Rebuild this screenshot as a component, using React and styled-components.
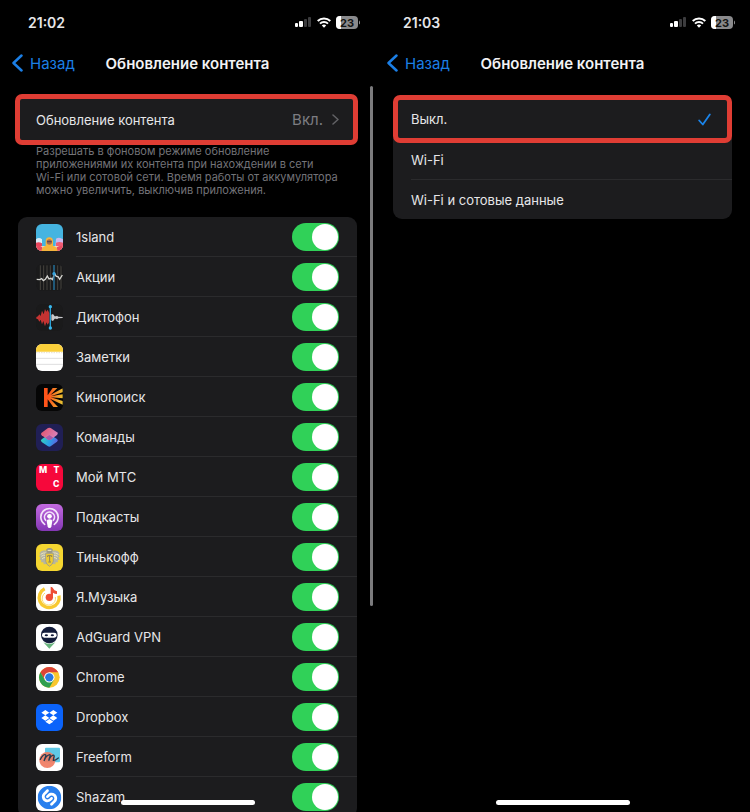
import React from 'react';
import styled, { createGlobalStyle, css } from 'styled-components';
import { SiShazam } from 'react-icons/si';

const GlobalStyle = createGlobalStyle`
    *{
        box-sizing: border-box;
    }
    body{
        margin: 0;
        background-color: #000;
        color: #e6e6e8;
        font-family: Inter, "Noto Sans", sans-serif;
        font-size: 13px;
    }
`;

const Screens = styled.div`
    display: grid;
    grid-template-columns: 1fr 1fr;
    height: 100vh;
`;

const Phone = styled.section`
    position: relative;
    display: flex;
    flex-direction: column;
    min-width: 0;
    min-height: 0;
`;

const StatusBar = styled.div`
    display: flex;
    justify-content: space-between;
    align-items: center;
    height: 44px;
    padding: 0 15px 0 28px;
    flex-shrink: 0;
`;

const Clock = styled.span`
    font-size: 14px;
    font-weight: 600;
`;

const StatusIcons = styled.span`
    display: flex;
    align-items: center;
    gap: 5px;
    svg{
        display: block;
    }
`;

const NavBar = styled.header`
    display: grid;
    grid-template-columns: 1fr auto 1fr;
    align-items: center;
    height: 38px;
    padding: 0 12px;
    flex-shrink: 0;
`;

const BackLink = styled.a`
    display: flex;
    align-items: center;
    gap: 7px;
    color: #1b7fe6;
    font-size: 15px;
    text-decoration: none;
`;

const Title = styled.h1`
    margin: 0;
    color: #f2f2f4;
    font-size: 15px;
    font-weight: 600;
`;

const Content = styled.main`
    flex: 1;
    min-height: 0;
    padding: 17px 18px 0;
    overflow-y: auto;
    scrollbar-width: none;
`;

const Card = styled.div`
    background-color: #1c1c1e;
    border-radius: 4px 4px 9px 9px;
`;

const highlight = css`
    position: relative;
    &::after{
        content: '';
        position: absolute;
        inset: ${props => props.$inset};
        border: 5px solid #df3d34;
        border-radius: 7px;
        background-color: transparent;
        pointer-events: none;
    }
`;

const LinkRow = styled.button`
    ${highlight}
    display: flex;
    align-items: center;
    width: 100%;
    height: 41px;
    padding: 0 18px;
    border: 0;
    background-color: #1c1c1e;
    color: inherit;
    font: inherit;
    text-align: left;
`;

const RowTitle = styled.span`
    flex: 1;
`;

const RowValue = styled.span`
    margin-right: 9px;
    color: #7d7d82;
    font-size: 15px;
`;

const Note = styled.p`
    margin: 5px 18px 20px;
    color: #737378;
    font-size: 11px;
    line-height: 13px;
    white-space: nowrap;
`;

const AppList = styled.ul`
    margin: 0;
    padding: 0;
    list-style: none;
    border-radius: 9px;
    background-color: #1c1c1e;
`;

const AppRow = styled.li`
    display: flex;
    align-items: center;
    gap: 13px;
    height: 40px;
    padding-left: 18px;
`;

const AppIcon = styled.svg`
    width: 27px;
    height: 27px;
    border-radius: 6px;
    flex-shrink: 0;
`;

const AppLabel = styled.label`
    display: flex;
    align-items: center;
    justify-content: space-between;
    flex: 1;
    height: 40px;
    padding-right: 18px;
    border-bottom: 1px solid #2b2b2d;
    ${AppRow}:last-child &{
        border-bottom: 0;
    }
`;

const Switch = styled.input`
    appearance: none;
    display: flex;
    align-items: center;
    width: 47px;
    height: 28px;
    margin: 0;
    padding: 0 1px;
    border-radius: 14px;
    background-color: #39393d;
    &::before{
        content: '';
        width: 26px;
        height: 26px;
        border-radius: 13px;
        background-color: #fff;
    }
    &:checked{
        justify-content: flex-end;
        background-color: #30d158;
    }
`;

const Option = styled.label`
    ${props => props.$inset && highlight}
    display: flex;
    align-items: center;
    justify-content: space-between;
    height: 40px;
    margin-left: 18px;
    padding-right: 21px;
    & + &{
        border-top: 1px solid #2b2b2d;
    }
`;

const Radio = styled.input`
    appearance: none;
    width: 0;
    height: 0;
    margin: 0 0 0 auto;
    & + svg{
        visibility: hidden;
    }
    &:checked + svg{
        visibility: visible;
    }
`;

const ScrollThumb = styled.div`
    position: absolute;
    top: 86px;
    right: 2px;
    width: 3px;
    height: 64%;
    border-radius: 2px;
    background-color: #7b7b7d;
`;

const HomeIndicator = styled.div`
    position: absolute;
    bottom: 7px;
    left: 50%;
    width: 134px;
    height: 5px;
    margin-left: -67px;
    border-radius: 3px;
    background-color: #fff;
`;

const apps = [
    {
        name: '1sland',
        icon: <>
            <rect width="81" height="81" fill="#45b4e0"/>
            <path d="M0 46q9-8 18 0v18H0z" fill="#d9eef8"/>
            <path d="M60 44q10-6 21 2v22H58z" fill="#c9b8ee"/>
            <path d="M0 56q9-4 18 2v23H0z" fill="#e8455b"/>
            <path d="M60 56q10-4 21 0v25H60z" fill="#ef5b74"/>
            <path d="M0 66h81v15H0z" fill="#f2d5bd"/>
            <path d="M0 66q10-4 19 4v11H0zM62 70q8-6 19-4v15H62z" fill="#e84a5f"/>
            <path d="M16 81q2-13 13-15V52q0-12 11-12t11 12v14q12 2 14 15z" fill="#f4b43c"/>
            <circle cx="40" cy="54" r="8" fill="#a86a4c"/>
            <path d="M33 51h14v4H33z" fill="#5e4a52"/>
        </>,
    },
    {
        name: 'Акции',
        icon: <>
            <rect width="81" height="81" fill="#1a1a1b"/>
            <path d="M13 4v74M23 4v74M33 4v74M43 4v74M65 4v74M75 4v74" stroke="#45433e" strokeWidth="3"/>
            <path d="M2 46l9 1 6-3 5 6 6-4 6-10 5 9 6-2 4 4 7-18 5 8 5 1 5 8 8-13" fill="none" stroke="#d6d6d2" strokeWidth="4"/>
            <path d="M54 3v75" stroke="#267aa8" strokeWidth="4"/>
            <circle cx="54" cy="29" r="5" fill="#38a5de"/>
        </>,
    },
    {
        name: 'Диктофон',
        icon: <>
            <rect width="81" height="81" fill="#1a1a1b"/>
            <path d="M1 39l5-2 4-6 4 5 4-16 5 11 4-16 4 8 4-6 5 10v27l-5 8-4-7-4 12-5-16-4 10-4-14-4 6-4-7-5-2z" fill="#c43332"/>
            <path d="M46 32l5-2 5 7h4l3-2 4 3 13 1v3l-13 1-4 3-3-2h-4l-5 7-5-2z" fill="#c9c9cb"/>
            <path d="M43 8v64" stroke="#2ba3d8" strokeWidth="4"/>
            <circle cx="43" cy="8" r="5" fill="#39b7ed"/>
            <circle cx="43" cy="72" r="5" fill="#39b7ed"/>
        </>,
    },
    {
        name: 'Заметки',
        icon: <>
            <rect width="81" height="81" fill="#fff"/>
            <path d="M0 0h81v23H0z" fill="#fbd03b"/>
            <path d="M0 26h81" stroke="#c9b98a" strokeWidth="2" strokeDasharray="2 3"/>
            <path d="M0 43h81M0 61h81" stroke="#dededf" strokeWidth="3"/>
        </>,
    },
    {
        name: 'Кинопоиск',
        icon: <>
            <defs>
                <linearGradient id="kino" x1="20" x2="81" y1="40" y2="45" gradientUnits="userSpaceOnUse">
                    <stop offset="0.3" stopColor="#ff541a"/>
                    <stop offset="1" stopColor="#e8c634"/>
                </linearGradient>
            </defs>
            <rect width="81" height="81" fill="#050505"/>
            <path d="M24 12h11v22L50 12h14L43 33l37-20v12L44 37l36-6v12l-36-3 36 11v11L42 44l24 25H52L35 46v23H24z" fill="url(#kino)"/>
        </>,
    },
    {
        name: 'Команды',
        icon: <>
            <defs>
                <linearGradient id="cmdTop" x1="15" x2="65" y1="15" y2="45" gradientUnits="userSpaceOnUse">
                    <stop stopColor="#f2596b"/>
                    <stop offset="1" stopColor="#e68fd0"/>
                </linearGradient>
                <linearGradient id="cmdBottom" x1="15" x2="65" y1="45" y2="65" gradientUnits="userSpaceOnUse">
                    <stop stopColor="#36d1bd"/>
                    <stop offset="0.5" stopColor="#2b9fe8"/>
                    <stop offset="1" stopColor="#6a54dd"/>
                </linearGradient>
            </defs>
            <rect width="81" height="81" fill="#201f55"/>
            <path d="M36 33q4-2 8 0l19 12q5 4 0 8L44 67q-4 2-8 0L17 54q-5-4 0-8z" fill="url(#cmdBottom)"/>
            <path d="M36 12q4-2 8 0l19 13q5 4 0 8L44 47q-4 2-8 0L17 34q-5-4 0-8z" fill="url(#cmdTop)" opacity="0.93"/>
            <path d="M28 41l12-8 12 8-8 6q-4 2-8 0z" fill="#a85aa8"/>
        </>,
    },
    {
        name: 'Мой МТС',
        icon: <>
            <rect width="81" height="81" fill="#f6083b"/>
            <g fill="#fff" fontSize="26" fontWeight="800" textAnchor="middle">
                <text x="21" y="27">М</text>
                <text x="61" y="27">Т</text>
                <text x="61" y="69">С</text>
            </g>
        </>,
    },
    {
        name: 'Подкасты',
        icon: <>
            <defs>
                <linearGradient id="pod" x2="0" y2="1">
                    <stop stopColor="#c36ae0"/>
                    <stop offset="1" stopColor="#8337b4"/>
                </linearGradient>
            </defs>
            <rect width="81" height="81" fill="url(#pod)"/>
            <g fill="none" stroke="#f3e4fa" strokeWidth="5" strokeLinecap="round">
                <path d="M26 61a26 26 0 1 1 29 0"/>
                <path d="M29 49a15 15 0 1 1 23 0"/>
            </g>
            <circle cx="40.5" cy="37" r="7" fill="#fff"/>
            <path d="M32 51q0-5 8.500-5t8.500 5l-3 17q-1 4-5.500 4T35 68z" fill="#fff"/>
        </>,
    },
    {
        name: 'Тинькофф',
        icon: <>
            <rect width="81" height="81" fill="#f5d631"/>
            <path d="M31 20q-14-4-21 8l3 4-4 5 5 4-4 6 6 2-1 6 7 0 1 6 10-1V20zM50 20q14-4 21 8l-3 4 4 5-5 4 4 6-6 2 1 6-7 0-1 6-10-1V20z" fill="#b5b5a2"/>
            <path d="M30 27q-9-2-16 4M30 34q-8-2-14 3M30 41q-7-2-12 4M51 27q9-2 16 4M51 34q8-2 14 3M51 41q7-2 12 4" fill="none" stroke="#e9e5c0" strokeWidth="3"/>
            <path d="M30 17l5-4 5-1 6 1 5 4-4 10H34z" fill="#98988a"/>
            <path d="M35 19h11" stroke="#f2ebc2" strokeWidth="3"/>
            <path d="M29 28h23v24q-2 10-11.500 15Q31 62 29 52z" fill="#efcc2e" stroke="#a3a08a" strokeWidth="3"/>
            <path d="M35 39v-4h12v4M41 35v18M37 54h8" fill="none" stroke="#8a815a" strokeWidth="3"/>
        </>,
    },
    {
        name: 'Я.Музыка',
        icon: <>
            <rect width="81" height="81" fill="#fff"/>
            <path d="M26 14a30 30 0 1 0 43 21" fill="none" stroke="#f8c931" strokeWidth="10"/>
            <path d="M27 27a20 20 0 1 0 31 12" fill="none" stroke="#fbd96a" strokeWidth="3"/>
            <circle cx="40" cy="40" r="11" fill="#ee4e36"/>
            <path d="M44 8q6 1 7 5 3 7 12 9v8q-7 0-12-4v14h-7z" fill="#ee4e36"/>
        </>,
    },
    {
        name: 'AdGuard VPN',
        icon: <>
            <rect width="81" height="81" fill="#fff"/>
            <path d="M22 55q18 9 36 0L40 74z" fill="#68b47e"/>
            <circle cx="40" cy="33" r="25" fill="#131c3b"/>
            <rect x="18" y="26" width="44" height="15" rx="7" fill="#fff"/>
            <ellipse cx="31" cy="34" rx="5" ry="3" fill="#131c3b"/>
            <ellipse cx="49" cy="34" rx="5" ry="3" fill="#131c3b"/>
        </>,
    },
    {
        name: 'Chrome',
        icon: <>
            <rect width="81" height="81" fill="#fff"/>
            <circle cx="40" cy="40" r="31" fill="#f9c72e"/>
            <path d="M13.200 24.500A31 31 0 0 1 66.800 24.500H40L26.600 47.800z" fill="#dc4437"/>
            <path d="M13.200 24.500A31 31 0 0 0 40 71L53.400 47.800H26.600z" fill="#2f9f50"/>
            <circle cx="40" cy="40" r="15.500" fill="#fff"/>
            <circle cx="40" cy="40" r="12.500" fill="#2878e2"/>
        </>,
    },
    {
        name: 'Dropbox',
        icon: <>
            <rect width="81" height="81" fill="#0b63fa"/>
            <path d="M28 18l12 8-12 8-12-8zM52 18l12 8-12 8-12-8zM28 34l12 8-12 8-12-8zM52 34l12 8-12 8-12-8zM40 45l12 8-12 8-12-8z" fill="#fff"/>
        </>,
    },
    {
        name: 'Freeform',
        icon: <>
            <rect width="81" height="81" fill="#fff"/>
            <rect x="27" y="11" width="45" height="44" rx="3" fill="#60c9e6"/>
            <circle cx="34" cy="48" r="24" fill="#f0795e" opacity="0.9"/>
            <path d="M13 46q7-13 13-14t2 8l-4 11q6-15 14-18t3 7l-3 10q5-14 12-16t3 8l-1 7q4 2 15-7" fill="none" stroke="#233c50" strokeWidth="4" strokeLinecap="round"/>
        </>,
    },
    {
        name: 'Shazam',
        icon: <>
            <rect width="81" height="81" fill="#fff"/>
            <SiShazam x="5" y="5" size={71} color="#2a80ee"/>
        </>,
    },
];

const networks = ['Выкл.', 'Wi-Fi', 'Wi-Fi и сотовые данные'];

function Header({ time })
{
    return(
        <>
            <StatusBar>
                <Clock>{time}</Clock>
                <StatusIcons>
                    <svg width="17" height="12" viewBox="0 0 17 12">
                        <rect x="0" y="7" width="3" height="4" rx="1" fill="#fff"/>
                        <rect x="4" y="5" width="4" height="6" rx="1" fill="#fff"/>
                        <rect x="9" y="3" width="3" height="8" rx="1" fill="#3c3c3e"/>
                        <rect x="13" y="1" width="3" height="10" rx="1" fill="#3c3c3e"/>
                    </svg>
                    <svg width="14" height="11" viewBox="0 0 14 11">
                        <g fill="none" stroke="#fff" strokeWidth="2">
                            <path d="M0.700 4a9 9 0 0 1 12.600 0"/>
                            <path d="M3 6.600a5.700 5.700 0 0 1 8 0"/>
                        </g>
                        <path d="M7 10.800L4.800 8.600a3.100 3.100 0 0 1 4.400 0z" fill="#fff"/>
                    </svg>
                    <svg width="24" height="13" viewBox="0 0 24 13">
                        <rect width="22" height="13" rx="4" fill="#8a8a8c"/>
                        <path d="M5 0H4a4 4 0 0 0-4 4v5a4 4 0 0 0 4 4h1z" fill="#fff"/>
                        <path d="M23 4.500q1.200 0.500 1.200 2t-1.200 2z" fill="#8a8a8c"/>
                        <text x="11" y="10.500" fontSize="11" fontWeight="700" textAnchor="middle" fill="#141414">23</text>
                    </svg>
                </StatusIcons>
            </StatusBar>
            <NavBar>
                <BackLink href="#back">
                    <svg width="11" height="18" viewBox="0 0 11 18">
                        <path d="M9.500 1.500L1.500 9l8 7.500" fill="none" stroke="currentColor" strokeWidth="2.500" strokeLinecap="round" strokeLinejoin="round"/>
                    </svg>
                    Назад
                </BackLink>
                <Title>Обновление контента</Title>
            </NavBar>
        </>
    )
}

function AppsScreen()
{
    return(
        <Phone>
            <Header time="21:02"/>
            <Content>
                <LinkRow type="button" $inset="-5px -1px -5px -3px">
                    <RowTitle>Обновление контента</RowTitle>
                    <RowValue>Вкл.</RowValue>
                    <svg width="7" height="11" viewBox="0 0 7 11">
                        <path d="M1 1l5 4.500L1 10" fill="none" stroke="#626266" strokeWidth="1.500" strokeLinecap="round" strokeLinejoin="round"/>
                    </svg>
                </LinkRow>
                <Note>
                    Разрешать в фоновом режиме обновление<br/>
                    приложениями их контента при нахождении в сети<br/>
                    Wi-Fi или сотовой сети. Время работы от аккумулятора<br/>
                    можно увеличить, выключив приложения.
                </Note>
                <AppList>
                    {apps.map(app => (
                        <AppRow key={app.name}>
                            <AppIcon viewBox="0 0 81 81" aria-hidden="true">{app.icon}</AppIcon>
                            <AppLabel>
                                {app.name}
                                <Switch type="checkbox" role="switch" defaultChecked/>
                            </AppLabel>
                        </AppRow>
                    ))}
                </AppList>
            </Content>
            <ScrollThumb/>
            <HomeIndicator/>
        </Phone>
    )
}

function NetworkScreen()
{
    return(
        <Phone>
            <Header time="21:03"/>
            <Content>
                <Card role="radiogroup" aria-label="Обновление контента">
                    {networks.map((name, i) => (
                        <Option key={name} $inset={i === 0 ? '-4px 0 -4px -18px' : null}>
                            {name}
                            <Radio type="radio" name="network" defaultChecked={i === 0}/>
                            <svg width="13" height="13" viewBox="0 0 13 13">
                                <path d="M1.200 7.500l3.600 4L11.800 1.500" fill="none" stroke="#1b84ea" strokeWidth="1.800" strokeLinecap="round" strokeLinejoin="round"/>
                            </svg>
                        </Option>
                    ))}
                </Card>
            </Content>
            <HomeIndicator/>
        </Phone>
    )
}

function App()
{
    return(
        <>
            <GlobalStyle/>
            <Screens>
                <AppsScreen/>
                <NetworkScreen/>
            </Screens>
        </>
    )
}

export default App;
